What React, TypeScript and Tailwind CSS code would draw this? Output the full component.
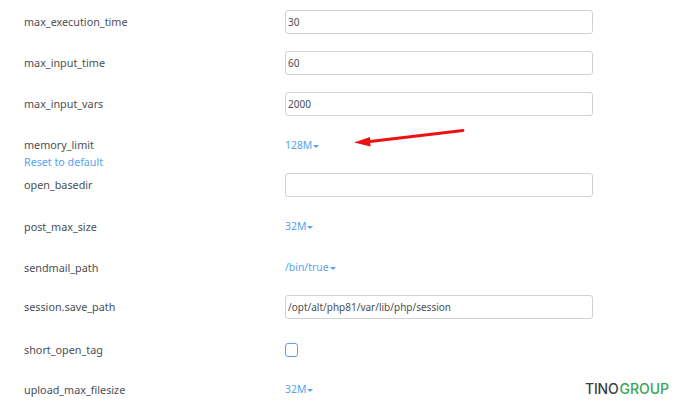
import React from 'react';

const font = { input: 'h-6 w-[308px] rounded-[3px] border border-[#cfd2d4] bg-white px-[2px] text-[10px] text-[#4a4f55] outline-none' };

const Caret = () => <span className="ml-[1px] inline-block border-x-[3px] border-t-[3px] border-x-transparent border-t-[#55a3f2] align-middle" />;

const Select = ({ value, className = '' }: { value: string; className?: string }) => (
  <span className={`text-[10.4px] leading-6 text-[#55a3f2] ${className}`}>
    {value}
    <Caret />
  </span>
);

const Row = ({ label, className, children }: { label: string; className: string; children: React.ReactNode }) => (
  <div className={`flex items-center ${className}`}>
    <div className="w-[261px] shrink-0 text-[10.8px] text-[#4a4f55]">{label}</div>
    {children}
  </div>
);

export default function App() {
  return (
    <div className="relative h-[400px] w-[700px] overflow-hidden bg-white pl-6 pt-[10px] font-['Noto_Sans',sans-serif]">
      <Row label="max_execution_time" className="h-6 mb-[17px]">
        <input className={font.input} defaultValue="30" />
      </Row>
      <Row label="max_input_time" className="h-6 mb-[17px]">
        <input className={font.input} defaultValue="60" />
      </Row>
      <Row label="max_input_vars" className="h-6 mb-[17px]">
        <input className={font.input} defaultValue="2000" />
      </Row>

      <div className="mt-[17px] flex h-6 items-center">
        <div className="w-[261px] shrink-0 pt-[1px] text-[10.8px] text-[#4a4f55]">memory_limit</div>
        <Select value="128M" />
      </div>
      <div className="h-[16px] text-[10.7px] leading-[10px] text-[#55a3f2]">Reset to default</div>

      <Row label="open_basedir" className="h-6 mb-[18px]">
        <input className={font.input} defaultValue="" />
      </Row>
      <Row label="post_max_size" className="h-6 mb-[17px]">
        <Select value="32M" className="mb-[2px]" />
      </Row>
      <Row label="sendmail_path" className="h-6 mb-[15px]">
        <Select value="/bin/true" className="mb-[2px]" />
      </Row>
      <Row label="session.save_path" className="h-6 mb-[19px]">
        <input className={font.input} defaultValue="/opt/alt/php81/var/lib/php/session" />
      </Row>
      <Row label="short_open_tag" className="h-6 mb-[16px]">
        <span className="h-[14px] w-[13px] rounded-[3px] border border-[#55a3f2] bg-white" />
      </Row>
      <Row label="upload_max_filesize" className="h-6">
        <Select value="32M" className="mb-[2px]" />
      </Row>

      {/* annotation arrow */}
      <svg className="absolute left-[350px] top-[124px]" width="120" height="26" viewBox="0 0 120 26">
        <path d="M113 6.5 L20 17.5" stroke="#ee1111" strokeWidth="2.8" strokeLinecap="round" fill="none" />
        <path d="M4 18.5 L20 13 L20.5 22.5 Z" fill="#ee1111" />
      </svg>

      {/* watermark */}
      <div className="absolute left-[585px] top-[381px] flex font-['Inter',sans-serif] text-[14px] font-medium leading-[16px]">
        <span className="tracking-[-0.2px] text-[#3a3f44]">TINO</span>
        <span className="ml-[1px] text-[#3aa655]">GROUP</span>
      </div>
    </div>
  );
}
